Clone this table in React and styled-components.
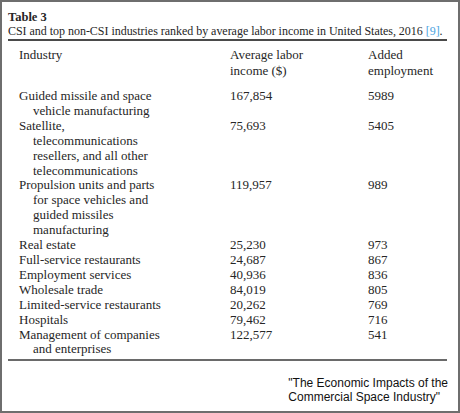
import styled, { createGlobalStyle } from 'styled-components'

const GlobalStyle = createGlobalStyle`
  html, body {
    margin: 0;
    padding: 0;
    background: #ffffff;
  }
`

const Frame = styled.div`
  box-sizing: border-box;
  width: 460px;
  height: 413px;
  border: 2px solid #6e6e6e;
  padding: 8px 11px 0 6px;
  display: flex;
  flex-direction: column;
  font-family: "Liberation Serif", "DejaVu Serif", serif;
  color: #262626;
`

const Label = styled.div`
  font-weight: bold;
  font-size: 12.5px;
  line-height: 14px;
`

const Caption = styled.div`
  font-size: 12px;
  line-height: 14px;
  letter-spacing: -0.03px;
  white-space: nowrap;
`

const Ref = styled.span`
  color: #4aa3df;
`

const Table = styled.table`
  margin-top: 1px;
  width: 100%;
  table-layout: fixed;
  border-collapse: collapse;
  border-top: 2px solid #4a4a4a;
  border-bottom: 2px solid #6a6a6a;
  font-size: 13px;
`

const Head = styled.th`
  text-align: left;
  font-weight: normal;
  vertical-align: top;
  line-height: 16px;
  padding: 6px 0 3px ${p => p.$pad || 0}px;
  width: ${p => (p.$w ? `${p.$w}px` : 'auto')};
  border-bottom: 2px solid transparent;
  border-image: linear-gradient(to right, #5a5a5a 0, #5a5a5a 67%, #111 67%, #111 82%, #5a5a5a 82%) 1;
`

const Cell = styled.td`
  vertical-align: top;
  line-height: 14.9px;
  padding: ${p => (p.$first ? 5 : 0)}px 0 ${p => (p.$last ? 2 : 0)}px ${p => p.$pad || 0}px;
`

const Line = styled.span`
  display: block;
  white-space: nowrap;
  padding-left: ${p => (p.$cont ? 14 : 0)}px;
`

const Quote = styled.div`
  align-self: flex-end;
  margin-top: 15px;
  margin-right: -1px;
  font-family: "Liberation Sans", Arial, sans-serif;
  font-size: 12px;
  line-height: 14px;
  color: #111;
`

const rows = [
  [['Guided missile and space', 'vehicle manufacturing'], '167,854', '5989'],
  [['Satellite,', 'telecommunications', 'resellers, and all other', 'telecommunications'], '75,693', '5405'],
  [['Propulsion units and parts', 'for space vehicles and', 'guided missiles', 'manufacturing'], '119,957', '989'],
  [['Real estate'], '25,230', '973'],
  [['Full-service restaurants'], '24,687', '867'],
  [['Employment services'], '40,936', '836'],
  [['Wholesale trade'], '84,019', '805'],
  [['Limited-service restaurants'], '20,262', '769'],
  [['Hospitals'], '79,462', '716'],
  [['Management of companies', 'and enterprises'], '122,577', '541'],
]

export default function App() {
  return (
    <>
      <GlobalStyle />
      <Frame>
        <Label>Table 3</Label>
        <Caption>
          CSI and top non-CSI industries ranked by average labor income in United States, 2016 <Ref>[9]</Ref>.
        </Caption>
        <Table>
          <thead>
            <tr>
              <Head $w={211} $pad={11}>Industry</Head>
              <Head $w={138}>Average labor<br />income ($)</Head>
              <Head>Added<br />employment</Head>
            </tr>
          </thead>
          <tbody>
            {rows.map(([name, income, jobs], i) => (
              <tr key={i}>
                <Cell $pad={11} $first={i === 0} $last={i === rows.length - 1}>
                  {name.map((l, j) => (
                    <Line key={j} $cont={j > 0}>{l}</Line>
                  ))}
                </Cell>
                <Cell $first={i === 0} $last={i === rows.length - 1}>{income}</Cell>
                <Cell $first={i === 0} $last={i === rows.length - 1}>{jobs}</Cell>
              </tr>
            ))}
          </tbody>
        </Table>
        <Quote>
          "The Economic Impacts of the<br />Commercial Space Industry"
        </Quote>
      </Frame>
    </>
  )
}
